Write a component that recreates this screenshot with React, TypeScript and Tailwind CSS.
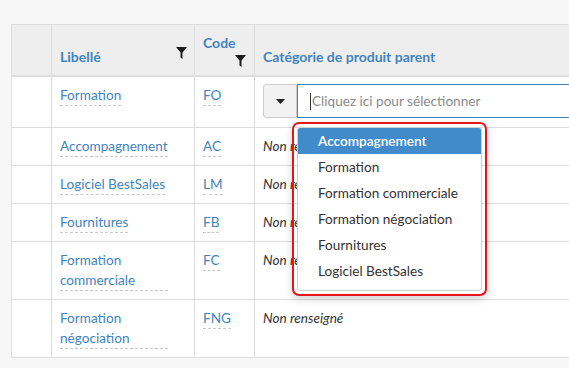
import { useState } from "react"

const font = { fontFamily: "Lato, 'Noto Sans', sans-serif" }

type Row = { label: string; code: string; h: string; wrap?: boolean; select?: boolean }

const rows: Row[] = [
  { label: "Formation", code: "FO", h: "h-[51px]", select: true },
  { label: "Accompagnement", code: "AC", h: "h-[38px]" },
  { label: "Logiciel BestSales", code: "LM", h: "h-[38px]" },
  { label: "Fournitures", code: "FB", h: "h-[38px]" },
  { label: "Formation commerciale", code: "FC", h: "h-[58px]", wrap: true },
  { label: "Formation négociation", code: "FNG", h: "h-[58px]", wrap: true },
]

const options = [
  "Accompagnement",
  "Formation",
  "Formation commerciale",
  "Formation négociation",
  "Fournitures",
  "Logiciel BestSales",
]

function Filter() {
  return (
    <svg width="11" height="12" viewBox="0 0 11 12" className="block">
      <polygon points="0,0 11,0 6.5,5.5 6.5,12 4.5,10.5 4.5,5.5" fill="#1c1c1c" />
    </svg>
  )
}

function Caret() {
  return (
    <svg width="9" height="5" viewBox="0 0 9 5">
      <polygon points="0,0 9,0 4.5,5" fill="#222" />
    </svg>
  )
}

function Link({ text, wrap }: { text: string; wrap?: boolean }) {
  return (
    <span
      className={`${wrap ? "block w-[108px]" : "inline-block"} border-b border-dashed border-[#c8c8c8] leading-5 text-[#3f84c1]`}
    >
      {text}
    </span>
  )
}

export default function App() {
  const [active] = useState(0)

  return (
    <div className="w-[569px] h-[368px] overflow-hidden bg-[#f7f7f7] pt-[24px] pl-[11px] text-[13.6px]" style={font}>
      <div className="relative w-[620px] bg-white border-l border-t border-[#dddddd]">
        {/* header */}
        <div className="grid grid-cols-[40px_143px_60px_1fr] h-[52px] bg-[#eeeeee] border-b-2 border-[#dddddd] font-bold text-[14px] text-[#3f84c1]">
          <div className="border-r border-[#dddddd]" />
          <div className="relative border-r border-[#dddddd] pl-[8px] pt-[22px] leading-5">
            Libellé
            <div className="absolute left-[124px] top-[22px]">
              <Filter />
            </div>
          </div>
          <div className="relative border-r border-[#dddddd] pl-[8px] pt-[8px] leading-5">
            Code
            <div className="absolute left-[40px] top-[30px]">
              <Filter />
            </div>
          </div>
          <div className="pl-[8px] pt-[22px] leading-5">Catégorie de produit parent</div>
        </div>

        {/* rows */}
        {rows.map((r) => (
          <div key={r.code} className={`grid grid-cols-[40px_143px_60px_1fr] ${r.h} border-b border-[#dddddd]`}>
            <div className="border-r border-[#dddddd]" />
            <div className="border-r border-[#dddddd] pl-[8px] pt-[8px]">
              <Link text={r.label} wrap={r.wrap} />
            </div>
            <div className="border-r border-[#dddddd] pl-[8px] pt-[8px]">
              <Link text={r.code} />
            </div>
            {r.select ? (
              <div className="flex pl-[8px] pt-[7px]">
                <div className="flex items-center justify-center w-[34px] h-[34px] bg-[#f2f2f2] border border-[#cccccc] rounded-l-[3px]">
                  <Caret />
                </div>
                <div className="flex items-center flex-1 h-[34px] border border-[#3a85c2] pl-[12px] text-[#8a8a8a]">
                  <span className="w-px h-[17px] bg-[#333] mr-px" />
                  Cliquez ici pour sélectionner
                </div>
              </div>
            ) : (
              <div className="pl-[8px] pt-[8px] leading-5 italic text-[#333]">Non renseigné</div>
            )}
          </div>
        ))}

        {/* open dropdown, outlined in red */}
        <div className="absolute left-[280px] top-[97px] w-[195px] h-[174px] border-2 border-[#e8141b] rounded-[7px] p-[3px] shadow-[0_3px_8px_rgba(0,0,0,0.18)]">
          <div className="h-full bg-white border border-[#cfcfcf] rounded-[3px] overflow-hidden">
            {options.map((o, i) => (
              <div
                key={o}
                className={`h-[26px] leading-[26px] pl-[20px] ${
                  i === active ? "bg-[#428bca] text-white font-semibold" : "text-[#333]"
                }`}
              >
                {o}
              </div>
            ))}
          </div>
        </div>
      </div>
    </div>
  )
}
